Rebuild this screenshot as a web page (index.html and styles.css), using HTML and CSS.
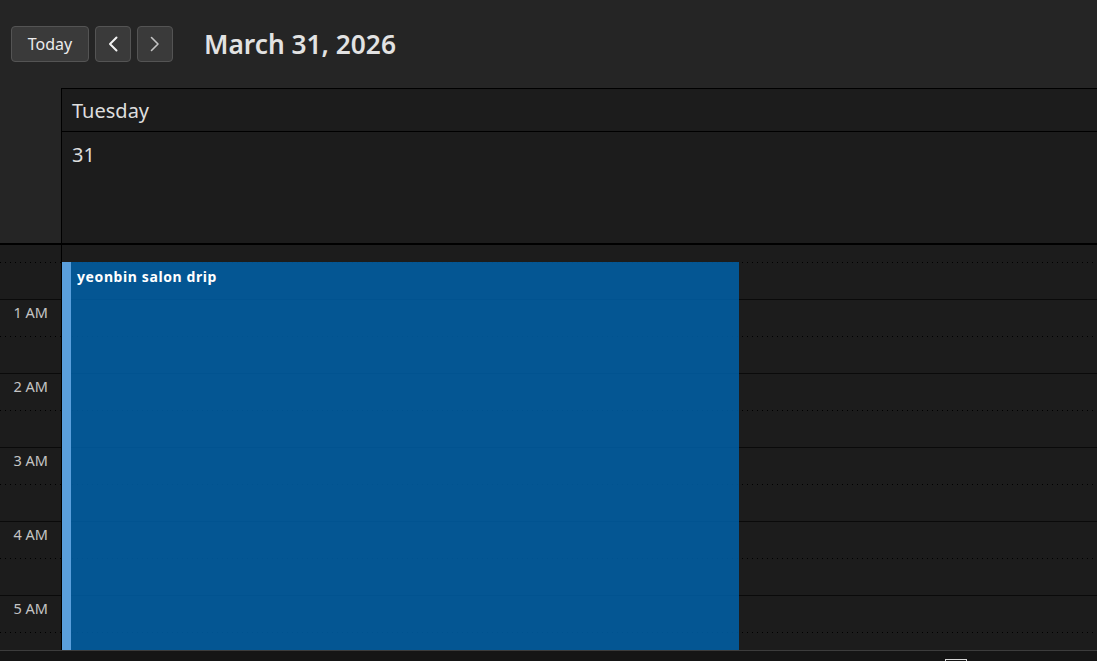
FILE: index.html
```html
<!DOCTYPE html>
<html lang="en">
<head>
<meta charset="utf-8">
<title>Calendar</title>
<link rel="stylesheet" href="styles.css">
</head>
<body>
<div class="app">
  <header class="toolbar">
    <button class="btn btn-today">Today</button>
    <button class="btn btn-icon" aria-label="Previous">
      <svg width="12" height="16" viewBox="0 0 12 16"><path d="M9.5 1.5 L3 8 L9.5 14.5" fill="none" stroke="#f2f2f2" stroke-width="2" stroke-linecap="round" stroke-linejoin="round"/></svg>
    </button>
    <button class="btn btn-icon" aria-label="Next">
      <svg width="12" height="16" viewBox="0 0 12 16"><path d="M2.5 1.5 L9 8 L2.5 14.5" fill="none" stroke="#c4c4c4" stroke-width="1.6" stroke-linecap="round" stroke-linejoin="round"/></svg>
    </button>
    <h1 class="title">March 31, 2026</h1>
  </header>

  <section class="cal-head">
    <div class="head-gutter"></div>
    <div class="day-head">
      <div class="day-name">Tuesday</div>
      <div class="day-date">31</div>
    </div>
  </section>

  <section class="cal-body">
    <div class="gutter">
      <div class="slot first"></div>
      <div class="slot"><span class="label">1 AM</span></div>
      <div class="slot"><span class="label">2 AM</span></div>
      <div class="slot"><span class="label">3 AM</span></div>
      <div class="slot"><span class="label">4 AM</span></div>
      <div class="slot"><span class="label">5 AM</span></div>
    </div>
    <div class="day-col">
      <div class="slot first"></div>
      <div class="slot"></div>
      <div class="slot"></div>
      <div class="slot"></div>
      <div class="slot"></div>
      <div class="slot"></div>
    </div>
    <div class="event">
      <div class="event-title">yeonbin salon drip</div>
    </div>
  </section>

  <footer class="footer">
    <div class="footer-box"></div>
  </footer>
</div>
</body>
</html>
```

FILE: styles.css
```css
* { box-sizing: border-box; }

html, body {
  margin: 0;
  padding: 0;
  background: #252525;
  font-family: "Noto Sans", "Open Sans", sans-serif;
  color: #e6e6e6;
  overflow: hidden;
}

.app {
  width: 1097px;
  height: 661px;
  display: flex;
  flex-direction: column;
}

/* Toolbar */
.toolbar {
  height: 88px;
  flex: none;
  display: flex;
  align-items: center;
  padding-left: 11px;
  gap: 6px;
  background: #252525;
}

.btn {
  height: 36px;
  margin: 0;
  border: 1px solid #545454;
  border-radius: 4px;
  background: #3a3a3a;
  color: #ececec;
  font-family: inherit;
  display: flex;
  align-items: center;
  justify-content: center;
  padding: 0;
  cursor: pointer;
}

.btn-today {
  width: 78px;
  font-size: 16px;
}

.btn-icon {
  width: 36px;
}

.title {
  margin: 0 0 0 25px;
  font-size: 26.3px;
  font-weight: 600;
  color: #e2e2e2;
}

/* Header */
.cal-head {
  flex: none;
  display: grid;
  grid-template-columns: 61px 1fr;
  border-bottom: 2px solid #000;
}

.head-gutter {
  background: #252525;
}

.day-head {
  background: #1c1c1c;
  border-left: 1px solid #000;
  border-top: 1px solid #000;
}

.day-name {
  height: 43px;
  border-bottom: 1px solid #000;
  padding: 1px 0 0 10px;
  font-size: 20px;
  line-height: 42px;
  color: #dedede;
}

.day-date {
  height: 111px;
  padding: 9px 0 0 10px;
  font-size: 20px;
  line-height: 28px;
  color: #dedede;
}

/* Body */
.cal-body {
  flex: none;
  height: 405px;
  display: grid;
  grid-template-columns: 61px 1fr;
  overflow: hidden;
  position: relative;
  background: #1c1c1c;
}

.day-col {
  border-left: 1px solid #000;
}

.slot {
  height: 74px;
  border-top: 1px solid #0a0a0a;
  background-image: repeating-linear-gradient(to right, #000 0 1px, transparent 1px 5px);
  background-size: 100% 1px;
  background-position: 0 36px;
  background-repeat: no-repeat;
}

.slot.first {
  margin-top: -20px;
}

.gutter .slot {
  text-align: right;
  padding: 1px 13px 0 0;
}

.label {
  font-size: 14.5px;
  line-height: 20px;
  color: #c4c4c4;
}

.event {
  position: absolute;
  top: 17px;
  left: 62px;
  width: 677px;
  height: 500px;
  background: rgba(0, 95, 166, 0.86);
  border-left: 9px solid #5a9fdc;
  padding: 5px 0 0 6px;
}

.event-title {
  font-size: 14px;
  font-weight: 700;
  letter-spacing: 0.6px;
  line-height: 19px;
  color: #ffffff;
}

/* Footer */
.footer {
  flex: 1;
  border-top: 1px solid #3c3c3c;
  background: #151515;
  overflow: hidden;
}

.footer-box {
  margin: 8px 0 0 945px;
  width: 22px;
  height: 12px;
  border: 1px solid #d8d8d8;
}
```
